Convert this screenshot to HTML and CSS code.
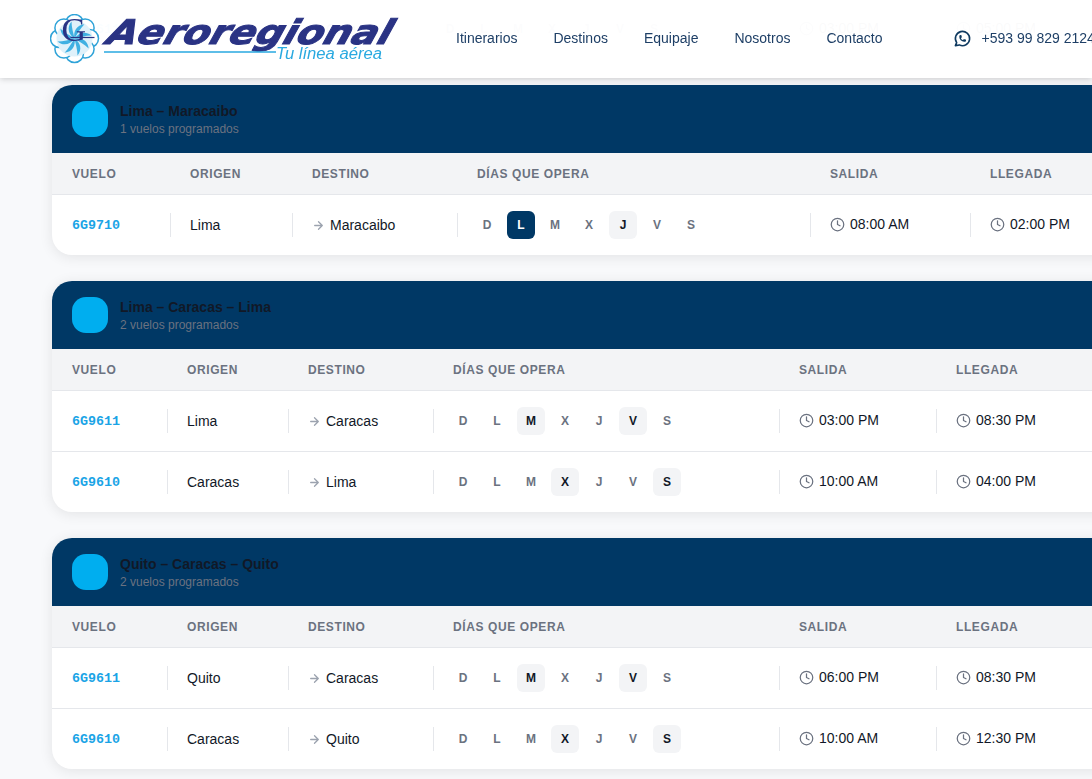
FILE: index.html
```html
<!DOCTYPE html>
<html lang="es">
<head>
    <meta charset="UTF-8">
    <meta name="viewport" content="width=device-width, initial-scale=1.0">
    <title>Aeroregional - Itinerarios</title>
    <link rel="stylesheet" href="styles.css">
</head>
<body>

    <svg class="sprite" xmlns="http://www.w3.org/2000/svg">
        <symbol id="clock" viewBox="0 0 24 24">
            <circle cx="12" cy="12" r="10"></circle>
            <polyline points="12 6 12 12 16 14"></polyline>
        </symbol>
        <symbol id="arrow" viewBox="0 0 24 24">
            <path d="M5 12h14M12 5l7 7-7 7"></path>
        </symbol>
    </svg>

    <!-- Header -->
    <header class="header">
        <svg class="logo" viewBox="0 0 350 50" width="350" height="50" xmlns="http://www.w3.org/2000/svg">
            <g transform="translate(24.5 24.5)">
                <g fill="#fff" stroke="#2fa3d8" stroke-width="1.5">
                    <circle cx="0" cy="-15" r="9"></circle>
                    <circle cx="10.6" cy="-10.6" r="9"></circle>
                    <circle cx="15" cy="0" r="9"></circle>
                    <circle cx="10.6" cy="10.6" r="9"></circle>
                    <circle cx="0" cy="15" r="9"></circle>
                    <circle cx="-10.6" cy="10.6" r="9"></circle>
                    <circle cx="-15" cy="0" r="9"></circle>
                    <circle cx="-10.6" cy="-10.6" r="9"></circle>
                </g>
                <circle r="18" fill="#dff1fa"></circle>
                <g fill="#3fb0e2">
                    <path d="M0 0C4 -6 11 -8 17 -3C11 -3 5 -1 0 0Z"></path>
                    <path d="M0 0C4 -6 11 -8 17 -3C11 -3 5 -1 0 0Z" transform="rotate(45)"></path>
                    <path d="M0 0C4 -6 11 -8 17 -3C11 -3 5 -1 0 0Z" transform="rotate(90)"></path>
                    <path d="M0 0C4 -6 11 -8 17 -3C11 -3 5 -1 0 0Z" transform="rotate(135)"></path>
                    <path d="M0 0C4 -6 11 -8 17 -3C11 -3 5 -1 0 0Z" transform="rotate(180)"></path>
                    <path d="M0 0C4 -6 11 -8 17 -3C11 -3 5 -1 0 0Z" transform="rotate(225)"></path>
                    <path d="M0 0C4 -6 11 -8 17 -3C11 -3 5 -1 0 0Z" transform="rotate(270)"></path>
                    <path d="M0 0C4 -6 11 -8 17 -3C11 -3 5 -1 0 0Z" transform="rotate(315)"></path>
                </g>
                <text class="logo-g" x="-13" y="2">G</text>
                <path d="M-4 -1H20" stroke="#2a3384" stroke-width="1.2"></path>
            </g>
            <text class="logo-word" transform="translate(55 29.5) skewX(-18)" textLength="284" lengthAdjust="spacingAndGlyphs">Aeroregional</text>
            <path d="M54 38H226" stroke="#29a9e0" stroke-width="1.5"></path>
            <text class="logo-tag" x="226" y="44.5" textLength="106" lengthAdjust="spacingAndGlyphs">Tu línea aérea</text>
        </svg>
        <nav class="nav-links">
            <a href="#">Itinerarios</a>
            <a href="#">Destinos</a>
            <a href="#">Equipaje</a>
            <a href="#">Nosotros</a>
            <a href="#">Contacto</a>
        </nav>
        <a class="phone" href="#">
            <svg class="whatsapp" viewBox="0 0 24 24" xmlns="http://www.w3.org/2000/svg">
                <path d="M3 21l1.65-3.8a9 9 0 1 1 3.4 2.9L3 21"></path>
                <path d="M9 10a.5.5 0 0 0 1 0V9a.5.5 0 0 0-1 0v1a5 5 0 0 0 5 5h1a.5.5 0 0 0 0-1h-1a.5.5 0 0 0 0 1"></path>
            </svg>
            +593 99 829 2124
        </a>
    </header>

    <main class="content">

        <!-- Previous route, scrolled under the header -->
        <section class="card card-under">
            <table class="flights cols-under">
                <colgroup><col class="c1"><col class="c2"><col class="c3"><col class="c4"><col class="c5"><col class="c6"></colgroup>
                <tbody>
                    <tr>
                        <td class="code"><div class="cell">6G9611</div></td>
                        <td><div class="cell">Quito</div></td>
                        <td><div class="cell"><svg class="arrow"><use href="#arrow"></use></svg>Caracas</div></td>
                        <td><div class="cell days"><span class="day">D</span><span class="day">L</span><span class="day">M</span><span class="day">X</span><span class="day">J</span><span class="day">V</span><span class="day">S</span></div></td>
                        <td><div class="cell"><svg class="clock"><use href="#clock"></use></svg>03:00 PM</div></td>
                        <td><div class="cell"><svg class="clock"><use href="#clock"></use></svg>05:00 PM</div></td>
                    </tr>
                </tbody>
            </table>
        </section>

        <!-- Lima - Maracaibo -->
        <section class="card">
            <div class="card-head">
                <div class="card-icon"></div>
                <div>
                    <div class="card-title">Lima – Maracaibo</div>
                    <div class="card-sub">1 vuelos programados</div>
                </div>
            </div>
            <table class="flights cols-one">
                <colgroup><col class="c1"><col class="c2"><col class="c3"><col class="c4"><col class="c5"><col class="c6"></colgroup>
                <thead>
                    <tr><th>Vuelo</th><th>Origen</th><th>Destino</th><th>Días que opera</th><th>Salida</th><th>Llegada</th></tr>
                </thead>
                <tbody>
                    <tr>
                        <td class="code"><div class="cell">6G9710</div></td>
                        <td><div class="cell">Lima</div></td>
                        <td><div class="cell"><svg class="arrow"><use href="#arrow"></use></svg>Maracaibo</div></td>
                        <td><div class="cell days"><span class="day">D</span><span class="day main">L</span><span class="day">M</span><span class="day">X</span><span class="day on">J</span><span class="day">V</span><span class="day">S</span></div></td>
                        <td><div class="cell"><svg class="clock"><use href="#clock"></use></svg>08:00 AM</div></td>
                        <td><div class="cell"><svg class="clock"><use href="#clock"></use></svg>02:00 PM</div></td>
                    </tr>
                </tbody>
            </table>
        </section>

        <!-- Lima - Caracas - Lima -->
        <section class="card">
            <div class="card-head">
                <div class="card-icon"></div>
                <div>
                    <div class="card-title">Lima – Caracas – Lima</div>
                    <div class="card-sub">2 vuelos programados</div>
                </div>
            </div>
            <table class="flights cols-two">
                <colgroup><col class="c1"><col class="c2"><col class="c3"><col class="c4"><col class="c5"><col class="c6"></colgroup>
                <thead>
                    <tr><th>Vuelo</th><th>Origen</th><th>Destino</th><th>Días que opera</th><th>Salida</th><th>Llegada</th></tr>
                </thead>
                <tbody>
                    <tr>
                        <td class="code"><div class="cell">6G9611</div></td>
                        <td><div class="cell">Lima</div></td>
                        <td><div class="cell"><svg class="arrow"><use href="#arrow"></use></svg>Caracas</div></td>
                        <td><div class="cell days"><span class="day">D</span><span class="day">L</span><span class="day on">M</span><span class="day">X</span><span class="day">J</span><span class="day on">V</span><span class="day">S</span></div></td>
                        <td><div class="cell"><svg class="clock"><use href="#clock"></use></svg>03:00 PM</div></td>
                        <td><div class="cell"><svg class="clock"><use href="#clock"></use></svg>08:30 PM</div></td>
                    </tr>
                    <tr>
                        <td class="code"><div class="cell">6G9610</div></td>
                        <td><div class="cell">Caracas</div></td>
                        <td><div class="cell"><svg class="arrow"><use href="#arrow"></use></svg>Lima</div></td>
                        <td><div class="cell days"><span class="day">D</span><span class="day">L</span><span class="day">M</span><span class="day on">X</span><span class="day">J</span><span class="day">V</span><span class="day on">S</span></div></td>
                        <td><div class="cell"><svg class="clock"><use href="#clock"></use></svg>10:00 AM</div></td>
                        <td><div class="cell"><svg class="clock"><use href="#clock"></use></svg>04:00 PM</div></td>
                    </tr>
                </tbody>
            </table>
        </section>

        <!-- Quito - Caracas - Quito -->
        <section class="card">
            <div class="card-head">
                <div class="card-icon"></div>
                <div>
                    <div class="card-title">Quito – Caracas – Quito</div>
                    <div class="card-sub">2 vuelos programados</div>
                </div>
            </div>
            <table class="flights cols-two">
                <colgroup><col class="c1"><col class="c2"><col class="c3"><col class="c4"><col class="c5"><col class="c6"></colgroup>
                <thead>
                    <tr><th>Vuelo</th><th>Origen</th><th>Destino</th><th>Días que opera</th><th>Salida</th><th>Llegada</th></tr>
                </thead>
                <tbody>
                    <tr>
                        <td class="code"><div class="cell">6G9611</div></td>
                        <td><div class="cell">Quito</div></td>
                        <td><div class="cell"><svg class="arrow"><use href="#arrow"></use></svg>Caracas</div></td>
                        <td><div class="cell days"><span class="day">D</span><span class="day">L</span><span class="day on">M</span><span class="day">X</span><span class="day">J</span><span class="day on">V</span><span class="day">S</span></div></td>
                        <td><div class="cell"><svg class="clock"><use href="#clock"></use></svg>06:00 PM</div></td>
                        <td><div class="cell"><svg class="clock"><use href="#clock"></use></svg>08:30 PM</div></td>
                    </tr>
                    <tr>
                        <td class="code"><div class="cell">6G9610</div></td>
                        <td><div class="cell">Caracas</div></td>
                        <td><div class="cell"><svg class="arrow"><use href="#arrow"></use></svg>Quito</div></td>
                        <td><div class="cell days"><span class="day">D</span><span class="day">L</span><span class="day">M</span><span class="day on">X</span><span class="day">J</span><span class="day">V</span><span class="day on">S</span></div></td>
                        <td><div class="cell"><svg class="clock"><use href="#clock"></use></svg>10:00 AM</div></td>
                        <td><div class="cell"><svg class="clock"><use href="#clock"></use></svg>12:30 PM</div></td>
                    </tr>
                </tbody>
            </table>
        </section>

    </main>

</body>
</html>
```

FILE: styles.css
```css
html, body {
    height: 779px;
    overflow: hidden;
}
body {
    font-family: "Liberation Sans", Arial, sans-serif;
    font-size: 14px;
    margin: 0;
    padding: 0;
    background: #f8f9fb;
    color: #111827;
}
.sprite {
    display: none;
}

/* Header Styling */
.header {
    position: fixed;
    top: 0;
    left: 0;
    width: 1092px;
    height: 78px;
    box-sizing: border-box;
    padding-left: 50px;
    padding-bottom: 2px;
    background: rgba(255, 255, 255, 0.98);
    box-shadow: 0 1px 6px rgba(0, 0, 0, 0.18);
    display: flex;
    align-items: center;
    white-space: nowrap;
    z-index: 10;
}
.logo {
    flex: none;
    margin-top: 2px;
}
.logo-g {
    font-family: "Liberation Serif", serif;
    font-size: 34px;
    fill: #2a3384;
}
.logo-word {
    font-family: "DejaVu Sans", sans-serif;
    font-size: 34px;
    font-weight: bold;
    font-style: italic;
    fill: #2a3384;
    stroke: #2a3384;
    stroke-width: 1px;
}
.logo-tag {
    font-family: "Liberation Sans", sans-serif;
    font-size: 16px;
    font-style: italic;
    fill: #29a9e0;
}
.nav-links {
    display: flex;
    gap: 36px;
    margin-left: 56px;
}
.nav-links a,
.phone {
    color: #1e3f66;
    text-decoration: none;
}
.phone {
    display: flex;
    align-items: center;
    gap: 10px;
    margin-left: 70px;
}
.whatsapp {
    width: 19px;
    height: 19px;
    fill: none;
    stroke: #0f3a60;
    stroke-width: 2;
    stroke-linecap: round;
    stroke-linejoin: round;
}

/* Route cards */
.content {
    display: flex;
    flex-direction: column;
    gap: 26px;
    margin-top: -1px;
    padding-left: 52px;
}
.card {
    width: 1200px;
    background: #fff;
    border-radius: 20px;
    overflow: hidden;
    box-shadow: 0 2px 14px rgba(0, 0, 0, 0.09);
}
.card-under {
    border-radius: 0 0 20px 20px;
}
.card-head {
    height: 68px;
    box-sizing: border-box;
    padding: 16px 20px;
    background: #003865;
    display: flex;
    align-items: center;
    gap: 12px;
}
.card-icon {
    width: 36px;
    height: 36px;
    border-radius: 14px;
    background: #00aeef;
}
.card-title {
    font-weight: bold;
    line-height: 18px;
    margin-top: 2px;
}
.card-sub {
    font-size: 12px;
    line-height: 18px;
    color: #6b7280;
}

/* Flights table */
.flights {
    width: 1200px;
    table-layout: fixed;
    border-collapse: collapse;
}
.flights th {
    height: 41px;
    padding: 0 0 0 20px;
    background: #f3f4f6;
    border-bottom: 1px solid #e5e7eb;
    text-align: left;
    font-size: 12px;
    font-weight: bold;
    letter-spacing: 0.6px;
    text-transform: uppercase;
    color: #6b7280;
}
.flights td {
    height: 60px;
    padding: 0;
    border-top: 1px solid #e5e7eb;
}
.flights tbody tr:first-child td {
    border-top: none;
}
.cell {
    height: 24px;
    box-sizing: border-box;
    display: flex;
    align-items: center;
    padding-left: 19px;
    border-left: 1px solid #e5e7eb;
}
.flights td:nth-child(n+5) .cell {
    padding-bottom: 2px;
}
.code .cell {
    border-left: none;
    padding-left: 20px;
    font-family: "Liberation Mono", monospace;
    font-size: 13.33px;
    font-weight: bold;
    color: #1ba4e6;
}
.arrow {
    width: 13px;
    height: 13px;
    margin-right: 5px;
    fill: none;
    stroke: #9ca3af;
    stroke-width: 2.4;
    stroke-linecap: round;
    stroke-linejoin: round;
}
.clock {
    width: 15px;
    height: 15px;
    margin-right: 5px;
    fill: none;
    stroke: #6b7280;
    stroke-width: 2;
    stroke-linecap: round;
    stroke-linejoin: round;
}
.days {
    gap: 6px;
    padding-left: 15px;
}
.day {
    width: 28px;
    height: 28px;
    border-radius: 6px;
    flex: none;
    display: flex;
    align-items: center;
    justify-content: center;
    font-size: 12px;
    font-weight: bold;
    color: #6b7280;
}
.day.on {
    background: #f3f4f6;
    color: #111827;
}
.day.main {
    background: #003865;
    color: #fff;
}

/* Column widths differ per table */
.cols-one .c1 { width: 118px; }
.cols-one .c2 { width: 122px; }
.cols-one .c3 { width: 165px; }
.cols-one .c4 { width: 353px; }
.cols-one .c5 { width: 160px; }

.cols-two .c1 { width: 115px; }
.cols-two .c2 { width: 121px; }
.cols-two .c3 { width: 145px; }
.cols-two .c4 { width: 346px; }
.cols-two .c5 { width: 157px; }

.cols-under .c1 { width: 115px; }
.cols-under .c2 { width: 121px; }
.cols-under .c3 { width: 132px; }
.cols-under .c4 { width: 359px; }
.cols-under .c5 { width: 157px; }
```
